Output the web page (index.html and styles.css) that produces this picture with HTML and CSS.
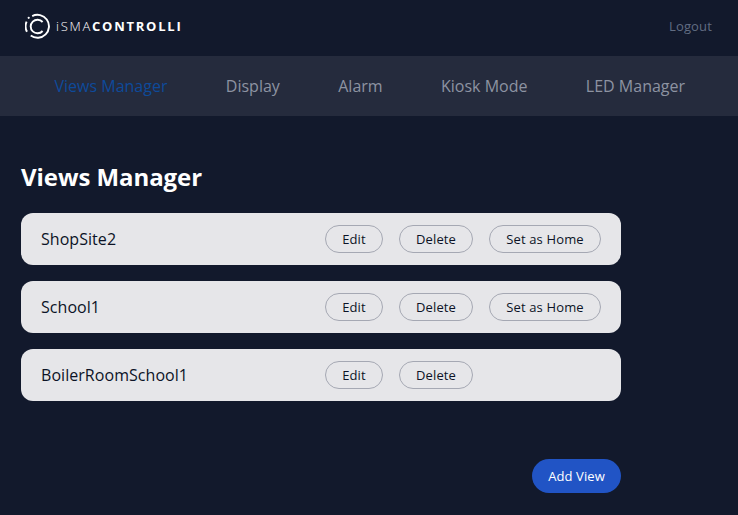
FILE: index.html
```html
<!DOCTYPE html>
<html lang="en">
<head>
<meta charset="utf-8">
<title>Views Manager</title>
<link rel="stylesheet" href="styles.css">
</head>
<body>
<header class="topbar">
  <div class="brand">
    <svg class="brand-icon" viewBox="0 0 26 26" width="26" height="26" fill="none" stroke="#fff" aria-hidden="true">
      <path d="M1.6 8.6A11.5 11.5 0 0 0 2 18.8" stroke-width="1.9"/>
      <circle cx="3.7" cy="4.8" r="1.1" fill="#fff" stroke="none"/>
      <path d="M7.2 3.1A11.5 11.5 0 1 1 5.7 22.6" stroke-width="1.9"/>
      <path d="M17.6 9A6.8 6.8 0 1 0 17.6 18" stroke-width="1.9"/>
    </svg>
    <span class="brand-text"><span class="brand-light">iSMA</span><span class="brand-bold">CONTROLLI</span></span>
  </div>
  <a class="logout" href="#">Logout</a>
</header>
<nav class="mainnav">
  <a class="navlink active" href="#">Views Manager</a>
  <a class="navlink" href="#">Display</a>
  <a class="navlink" href="#">Alarm</a>
  <a class="navlink" href="#">Kiosk Mode</a>
  <a class="navlink" href="#">LED Manager</a>
</nav>
<main class="content">
  <h1 class="title">Views Manager</h1>
  <ul class="views">
    <li class="view">
      <span class="view-name">ShopSite2</span>
      <div class="actions">
        <button class="btn edit">Edit</button>
        <button class="btn delete">Delete</button>
        <button class="btn home">Set as Home</button>
      </div>
    </li>
    <li class="view">
      <span class="view-name">School1</span>
      <div class="actions">
        <button class="btn edit">Edit</button>
        <button class="btn delete">Delete</button>
        <button class="btn home">Set as Home</button>
      </div>
    </li>
    <li class="view">
      <span class="view-name">BoilerRoomSchool1</span>
      <div class="actions">
        <button class="btn edit">Edit</button>
        <button class="btn delete">Delete</button>
      </div>
    </li>
  </ul>
  <div class="footer-row">
    <button class="add">Add View</button>
  </div>
</main>
</body>
</html>
```
FILE: styles.css
```css
* { box-sizing: border-box; }
html, body { margin: 0; padding: 0; }
body {
  width: 738px;
  height: 515px;
  overflow: hidden;
  background: #12192c;
  font-family: "Open Sans", "Liberation Sans", sans-serif;
}
.topbar {
  height: 56px;
  display: flex;
  align-items: center;
  justify-content: space-between;
  padding: 0 26px 4px 25px;
}
.brand { display: flex; align-items: center; gap: 5px; }
.brand-icon { display: block; }
.brand-text {
  font-size: 13px;
  letter-spacing: 1.75px;
  color: #fff;
  white-space: nowrap;
}
.brand-light { font-weight: 300; }
.brand-bold { font-weight: 700; }
.logout {
  color: #616c82;
  font-size: 13px;
  letter-spacing: 0.15px;
  text-decoration: none;
}
.mainnav {
  height: 60px;
  background: #252b3d;
  display: flex;
  align-items: center;
  gap: 58.4px;
  padding-left: 54.5px;
}
.navlink {
  color: #8d93a2;
  font-size: 16px;
  text-decoration: none;
  white-space: nowrap;
}
.navlink.active { color: #0e4a9a; }
.content { padding: 44px 0 0 21px; width: 621px; }
.title {
  margin: 0 0 19px;
  color: #fff;
  font-size: 24px;
  font-weight: 700;
  line-height: 34px;
  letter-spacing: -0.06px;
}
.views {
  list-style: none;
  margin: 0;
  padding: 0;
  display: flex;
  flex-direction: column;
  gap: 16px;
}
.view {
  height: 52px;
  background: #e6e6e9;
  border-radius: 12px;
  display: flex;
  align-items: center;
  justify-content: space-between;
  padding: 0 20px;
}
.view-name { color: #0c1326; font-size: 16px; letter-spacing: 0.05px; }
.actions { width: 276px; display: flex; gap: 16px; }
.btn {
  height: 28px;
  padding: 0;
  background: transparent;
  border: 1px solid #a5a8b3;
  border-radius: 14px;
  color: #0c1326;
  font: 13px "Open Sans", "Liberation Sans", sans-serif;
  letter-spacing: 0.15px;
}
.edit { width: 58px; }
.delete { width: 74px; }
.home { width: 112px; }
.footer-row { display: flex; justify-content: flex-end; margin-top: 58px; }
.add {
  width: 89px;
  height: 34px;
  padding: 0;
  border: 0;
  border-radius: 17px;
  background: #2154c5;
  color: #fff;
  font: 13px "Open Sans", "Liberation Sans", sans-serif;
  letter-spacing: 0.1px;
}
```
